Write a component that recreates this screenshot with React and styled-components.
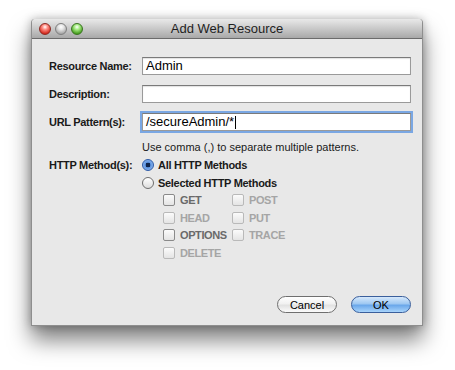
import styled, { createGlobalStyle } from "styled-components";

const GlobalStyle = createGlobalStyle`
  body {
    margin: 0;
    background: #ffffff;
    font-family: "Liberation Sans", Arial, sans-serif;
  }
`;

const Page = styled.div`
  width: 455px;
  height: 370px;
  padding: 19px 0 0 31px;
  box-sizing: border-box;
`;

const Window = styled.div`
  width: 392px;
  height: 307px;
  display: flex;
  flex-direction: column;
  background: #e8e8e8;
  border: 1px solid #8e8e8e;
  border-top: none;
  box-sizing: border-box;
  border-radius: 4px 4px 0 0;
  box-shadow: 0 14px 22px rgba(0, 0, 0, 0.5), 0 0 10px rgba(0, 0, 0, 0.28);
`;

const TitleBar = styled.div`
  height: 19px;
  display: flex;
  align-items: center;
  position: relative;
  padding-left: 7px;
  gap: 4px;
  border-radius: 4px 4px 0 0;
  background: linear-gradient(#e9e9e9, #c9c9c9 50%, #a8a8a8);
  border-bottom: 1px solid #6b6b6b;
`;

const Light = styled.span`
  width: 12px;
  height: 12px;
  border-radius: 50%;
  box-sizing: border-box;
  border: 1px solid ${(p) => p.$edge};
  background: radial-gradient(circle at 50% 30%, #ffffff 0, ${(p) => p.$light} 30%, ${(p) => p.$color} 75%);
`;

const Title = styled.div`
  position: absolute;
  left: 0;
  right: 0;
  text-align: center;
  font-size: 13px;
  color: #1e1e1e;
  pointer-events: none;
`;

const Body = styled.div`
  flex: 1;
  display: flex;
  flex-direction: column;
  padding: 18px 11px 12px 17px;
`;

const Form = styled.div`
  display: grid;
  grid-template-columns: 93px 1fr;
  align-items: center;
  row-gap: 10px;
`;

const Label = styled.label`
  font-size: 11px;
  font-weight: bold;
  letter-spacing: -0.3px;
  color: #1a1a1a;
  align-self: ${(p) => (p.$top ? "start" : "center")};
  margin-top: ${(p) => (p.$top ? "-4px" : "0")};
`;

const Field = styled.div`
  height: 18px;
  box-sizing: border-box;
  background: #fff;
  border: 1px solid #9a9a9a;
  border-top-color: #7a7a7a;
  box-shadow: ${(p) => (p.$focus ? "0 0 0 2px #7aa7e3" : "inset 0 1px 1px rgba(0,0,0,0.12)")};
  padding: 0 3px;
  font-size: 13px;
  line-height: 16px;
  color: #000;
  display: flex;
  align-items: center;
`;

const Caret = styled.span`
  display: inline-block;
  width: 1px;
  height: 13px;
  background: #000;
  margin-left: 1px;
`;

const Hint = styled.div`
  grid-column: 2;
  font-size: 11px;
  color: #1a1a1a;
`;

const Methods = styled.div`
  display: flex;
  flex-direction: column;
  gap: 4px;
  margin-top: -5px;
`;

const Radio = styled.div`
  display: flex;
  align-items: center;
  gap: 4px;
  font-size: 11px;
  font-weight: bold;
  letter-spacing: -0.3px;
  color: #1a1a1a;
  height: 14px;
`;

const RadioDot = styled.span`
  width: 12px;
  height: 12px;
  border-radius: 50%;
  box-sizing: border-box;
  border: 1px solid ${(p) => (p.$on ? "#2c5aa8" : "#6e6e6e")};
  background: ${(p) =>
    p.$on
      ? "radial-gradient(circle, #10254a 0 2.2px, #5c93e0 2.6px, #a6c8f2 100%)"
      : "linear-gradient(#ffffff, #dcdcdc)"};
`;

const Checks = styled.div`
  display: grid;
  grid-template-columns: 69px auto;
  row-gap: 3px;
  padding-left: 21px;
  margin-top: -1px;
`;

const Check = styled.div`
  display: flex;
  align-items: center;
  gap: 5px;
  height: 14.5px;
  font-size: 11px;
  font-weight: bold;
  letter-spacing: -0.4px;
  color: ${(p) => (p.$enabled ? "#6a6a6a" : "#a5a5a5")};
`;

const Box = styled.span`
  width: 12px;
  height: 12px;
  box-sizing: border-box;
  border-radius: 2px;
  border: 1px solid ${(p) => (p.$enabled ? "#8a8a8a" : "#b9b9b9")};
  background: linear-gradient(#fbfbfb, #e4e4e4);
`;

const Footer = styled.div`
  margin-top: auto;
  display: flex;
  justify-content: flex-end;
  gap: 14px;
`;

const Button = styled.button`
  width: 60px;
  height: 17px;
  border-radius: 9px;
  font-family: inherit;
  font-size: 11px;
  padding: 0;
  color: #000;
  border: 1px solid ${(p) => (p.$primary ? "#3a5f9c" : "#6f6f6f")};
  background: ${(p) =>
    p.$primary
      ? "linear-gradient(#d6e8fb 0%, #9ec8f2 45%, #6aa7ea 55%, #a8d4fb 100%)"
      : "linear-gradient(#ffffff 0%, #f1f1f1 45%, #e2e2e2 55%, #fbfbfb 100%)"};
`;

const checks = [
  ["GET", true],
  ["POST", false],
  ["HEAD", false],
  ["PUT", false],
  ["OPTIONS", true],
  ["TRACE", false],
  ["DELETE", false],
];

export default function App() {
  return (
    <Page>
      <GlobalStyle />
      <Window>
        <TitleBar>
          <Light $color="#d42a1e" $light="#ff8f86" $edge="#8e2a24" />
          <Light $color="#a8a8a8" $light="#e6e6e6" $edge="#7f7f7f" />
          <Light $color="#4aa021" $light="#a8ec86" $edge="#3a7422" />
          <Title>Add Web Resource</Title>
        </TitleBar>
        <Body>
          <Form>
            <Label>Resource Name:</Label>
            <Field>Admin</Field>
            <Label>Description:</Label>
            <Field />
            <Label>URL Pattern(s):</Label>
            <Field $focus>
              /secureAdmin/*<Caret />
            </Field>
            <Hint>Use comma (,) to separate multiple patterns.</Hint>
            <Label $top>HTTP Method(s):</Label>
            <Methods>
              <Radio>
                <RadioDot $on />
                All HTTP Methods
              </Radio>
              <Radio>
                <RadioDot />
                Selected HTTP Methods
              </Radio>
              <Checks>
                {checks.map(([name, enabled]) => (
                  <Check key={name} $enabled={enabled}>
                    <Box $enabled={enabled} />
                    {name}
                  </Check>
                ))}
              </Checks>
            </Methods>
          </Form>
          <Footer>
            <Button>Cancel</Button>
            <Button $primary>OK</Button>
          </Footer>
        </Body>
      </Window>
    </Page>
  );
}
